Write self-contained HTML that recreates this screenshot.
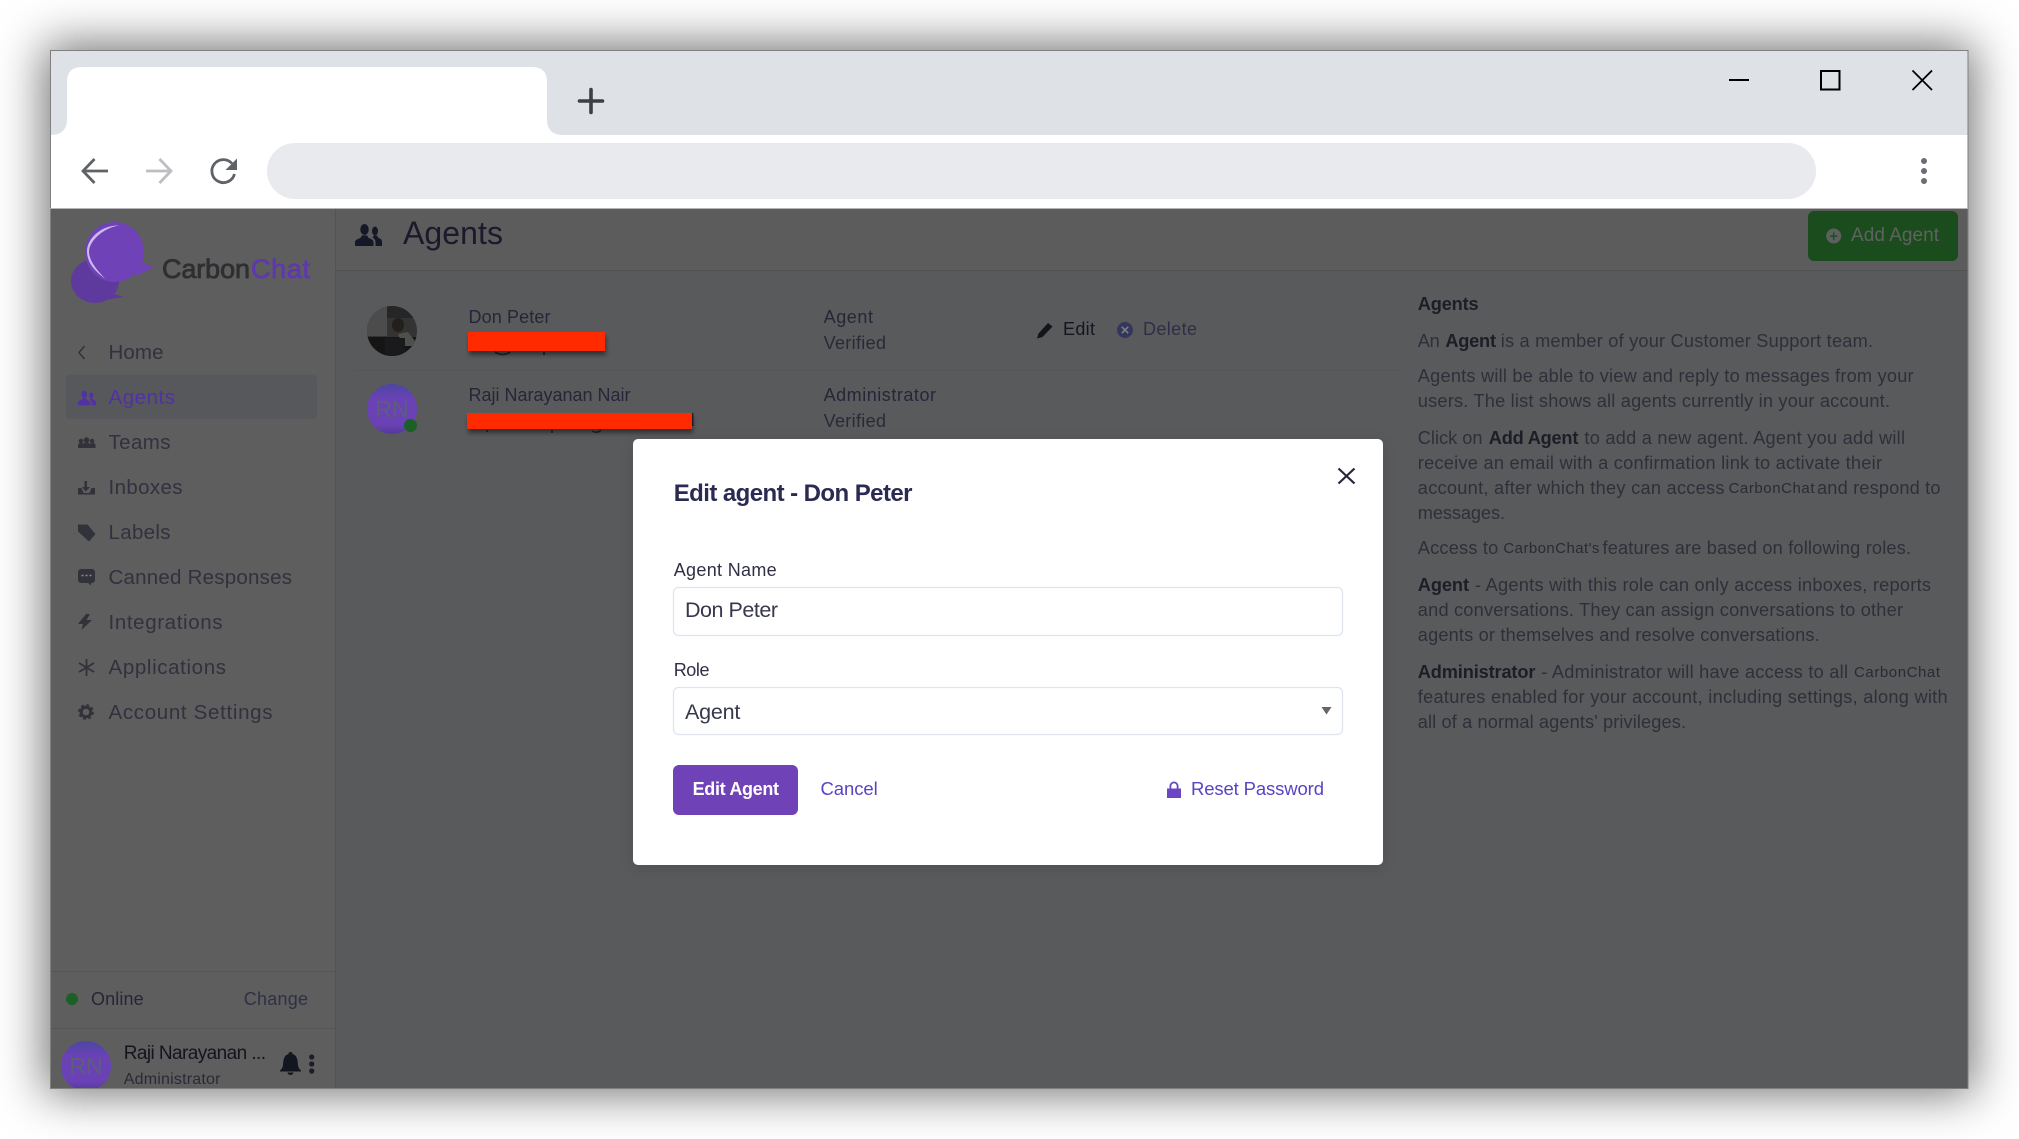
<!DOCTYPE html>
<html><head><meta charset="utf-8"><title>Agents</title>
<style>
html,body{margin:0;padding:0;background:#fff;width:2019px;height:1139px;overflow:hidden}
#w{position:absolute;left:50px;top:50px;width:1918px;height:1038px;box-shadow:0 0 44px 6px rgba(0,0,0,.55)}
svg{position:absolute;left:0;top:0}
text{font-family:"Liberation Sans",sans-serif;white-space:pre}
.n{font-size:20.5px;fill:#32313e}
.h{font-size:18.2px;fill:#2f2f3a}
.b{font-size:18.2px;font-weight:bold;fill:#1d1d27}
.c{font-size:15px;fill:#2a2a34}
.t{font-size:18px;fill:#272538}
.f{font-size:18px;fill:#2f2f46}
.v{font-size:21.500px;fill:#38384c}
.l{font-size:18.500px;fill:#5a42c4}
.i{fill:#32323a}
</style></head><body>
<div id="w"></div>
<svg width="2019" height="1139" viewBox="0 0 2019 1139" xmlns="http://www.w3.org/2000/svg">
<defs>
<filter id="rs" x="-10%" y="-30%" width="120%" height="180%"><feDropShadow dx="1" dy="4" stdDeviation="2.5" flood-color="#000" flood-opacity=".45"/></filter>
<filter id="ms" x="-5%" y="-5%" width="110%" height="110%"><feDropShadow dx="0" dy="3" stdDeviation="8" flood-color="#000" flood-opacity=".12"/></filter>
<linearGradient id="av" x1="0" y1="0" x2="0" y2="1"><stop offset="0" stop-color="#4c46a2"/><stop offset=".3" stop-color="#6a42b6"/><stop offset=".8" stop-color="#6a42b6"/><stop offset="1" stop-color="#55399a"/></linearGradient>
<clipPath id="c1"><circle cx="392" cy="331" r="25"/></clipPath>
<clipPath id="c2"><rect x="50" y="209" width="285" height="879"/></clipPath>
<symbol id="ppl" viewBox="0 0 27 22"><ellipse cx="9.5" cy="5.5" rx="4.2" ry="5.5"/><path d="M0 22v-3.500c0-3 3.500-3.600 5.500-4.600l1.500-2.500h5l1.500 2.500c2 1 5 1.600 5 4.600V22z"/><ellipse cx="20" cy="7" rx="3" ry="4.500"/><path d="M20.500 22v-4c0-2.500-1.500-3.500-3-4.500l1.500-2h3l1.500 2.500c2 .7 3.500 1.300 3.500 4v4z"/></symbol>
</defs>

<!-- browser chrome -->
<rect x="50" y="50" width="1918" height="85" fill="#dee1e6"/>
<rect x="50" y="135" width="1918" height="74" fill="#fff"/>
<path d="M50 135Q67 135 67 119V82Q67 67 82 67H532Q547 67 547 82V119Q547 135 563 135Z" fill="#fff"/>
<path d="M579.500 101H602.500M591 89.500V112.500" stroke="#3c4043" stroke-width="3.600" stroke-linecap="round" fill="none"/>
<path d="M108 171H84M94.500 159L83 171L94.500 183" stroke="#5f6368" stroke-width="2.800" fill="none"/>
<path d="M146 171H170M159.500 159L171 171L159.500 183" stroke="#bcbec1" stroke-width="2.800" fill="none"/>
<path d="M232 163.500A11.500 11.500 0 1 0 234.500 174" stroke="#5f6368" stroke-width="2.800" fill="none"/>
<path d="M237 158.500V170H225.500Z" fill="#5f6368"/>
<rect x="267" y="143" width="1549" height="56" rx="28" fill="#e8eaed"/>
<path d="M1729 80H1749" stroke="#000" stroke-width="2"/>
<rect x="1821" y="71" width="18.500" height="18.500" fill="none" stroke="#000" stroke-width="2"/>
<path d="M1912.500 70.500L1932 90M1932 70.500L1912.500 90" stroke="#000" stroke-width="1.800"/>
<circle cx="1924" cy="161" r="3" fill="#6a6d73"/><circle cx="1924" cy="171" r="3" fill="#6a6d73"/><circle cx="1924" cy="181" r="3" fill="#6a6d73"/>

<!-- app bg -->
<rect x="50" y="209" width="285" height="879" fill="#5e5e5e"/>
<rect x="335" y="209" width="1633" height="62" fill="#5c5c5c"/>
<rect x="335" y="271" width="1633" height="817" fill="#595a5c"/>
<path d="M335.500 209V1088" stroke="#525358"/>
<path d="M335 270.500H1968" stroke="#4f5054"/>
<path d="M355 370.500H1400" stroke="#55565a"/>

<!-- logo -->
<ellipse cx="95" cy="281" rx="24" ry="22" fill="#5e3a9e"/>
<path d="M108 292L124 297L104 300Z" fill="#5e3a9e"/>
<ellipse cx="114.500" cy="252" rx="29.500" ry="30" fill="#6f42b8"/>
<path d="M130 258L154 267L136 276Z" fill="#6f42b8"/>
<path d="M119 225.500C100 225 86.500 240 87 252C87.500 264 96 272 105 278.500C98 271 89.500 262 89 252C89 241 103 228 119 225.500Z" fill="#cdbbec"/>
<text x="162" y="278" font-size="27" fill="#2f2f32" stroke="#2f2f32" stroke-width=".8" textLength="88">Carbon</text>
<text x="251" y="278" font-size="27" fill="#5f38ae" stroke="#5f38ae" stroke-width=".8" textLength="59">Chat</text>

<!-- sidebar -->
<rect x="66" y="375" width="251" height="44" rx="4" fill="#57585b"/>
<path d="M84.500 346L79 352.500L84.500 359" fill="none" stroke="#32323a" stroke-width="1.500"/>
<text class="n" x="108.500" y="359" textLength="55">Home</text>
<use href="#ppl" x="78" y="390" width="18" height="16" fill="#5330a8"/>
<text class="n" x="108.500" y="404" textLength="66.500" style="fill:#5330a8">Agents</text>
<g class="i"><circle cx="81" cy="441" r="2.300"/><circle cx="86.500" cy="440" r="2.800"/><circle cx="92" cy="441" r="2.300"/><path d="M78 448v-3c0-1.500 1.500-2 3-2s2.500.5 2.500 2v3zM83 448v-3.500c0-1.500 1.500-2 3.500-2s3.500.5 3.500 2v3.500zM90 448v-3c0-1.500 1-2 2.500-2s3 .5 3 2v3z"/></g>
<path class="i" d="M84.500 481h2.500v6h3l-4.300 4.500L82 487h2.500zM78 488h3.500l2 5h6l2-5H95v6.500H78z"/>
<text class="n" x="108.500" y="449" textLength="62">Teams</text>
<text class="n" x="108.500" y="494" textLength="74">Inboxes</text>
<path class="i" d="M78 524.500h9.500l8 9.500-6.500 7.500L78 531.500z"/>
<text class="n" x="108.500" y="539" textLength="62">Labels</text>
<path class="i" d="M81 569h11a3 3 0 0 1 3 3v8a3 3 0 0 1-3 3h-1v2.500l-3-2.500h-7a3 3 0 0 1-3-3v-8a3 3 0 0 1 3-3z"/>
<path d="M81.500 575.500h2M85.500 575.500h2M89.500 575.500h2" stroke="#8a8a8e" stroke-width="1.500"/>
<text class="n" x="108.500" y="584" textLength="183.500">Canned Responses</text>
<path class="i" d="M86 614L78 624h5L81.500 630L92 620h-5.500L90 614z"/>
<text class="n" x="108.500" y="629" textLength="114">Integrations</text>
<path d="M86.500 659V676M79 663L94 672M94 663L79 672" stroke="#32323a" stroke-width="1.800" fill="none"/>
<text class="n" x="108.500" y="674" textLength="117.500">Applications</text>
<circle cx="86" cy="712" r="4.800" fill="none" stroke="#32323a" stroke-width="3"/>
<circle cx="86" cy="712" r="7" fill="none" stroke="#32323a" stroke-width="1.800" stroke-dasharray="3 2.500"/>
<text class="n" x="108.500" y="719" textLength="164">Account Settings</text>

<path d="M50 971.500H335M50 1028.500H335" stroke="#55565a"/>
<circle cx="72" cy="999" r="6" fill="#1c5f27"/>
<text class="t" x="91" y="1005" textLength="52.700">Online</text>
<text class="t" x="243.700" y="1005" textLength="64.300" style="fill:#2f2f48">Change</text>
<g clip-path="url(#c2)">
<circle cx="86" cy="1066" r="25" fill="url(#av)"/>
<text x="86" y="1074" font-size="23" text-anchor="middle" fill="#5b6078">RN</text>
</g>
<text x="123.700" y="1059" font-size="19" fill="#14141f" textLength="142.300">Raji Narayanan ...</text>
<text x="123.700" y="1084" font-size="16" fill="#2a2a36" textLength="96.800">Administrator</text>
<path d="M290.500 1052a2 2 0 0 1 2 2c5 1.500 5 6 5.500 11c.3 3 1.500 4 3 5.500v1h-21v-1c1.500-1.500 2.700-2.500 3-5.500c.5-5 .5-9.500 5.500-11a2 2 0 0 1 2-2zM287.500 1072.500h6a3 2.500 0 0 1-6 0z" fill="#14161f"/>
<circle cx="311.700" cy="1057" r="2.600" fill="#1c1d26"/><circle cx="311.700" cy="1064" r="2.600" fill="#1c1d26"/><circle cx="311.700" cy="1071" r="2.600" fill="#1c1d26"/>

<!-- header -->
<use href="#ppl" x="355" y="224" width="27" height="22" fill="#161827"/>
<text x="403" y="244" font-size="32" fill="#1a1a2c" textLength="100">Agents</text>
<rect x="1808" y="211" width="150" height="50" rx="6" fill="#1b4c1d"/>
<circle cx="1833.700" cy="236" r="7.500" fill="#5c605f"/>
<path d="M1830 236.200h7.500M1833.700 232.500v7.500" stroke="#1b4c1d" stroke-width="1.300"/>
<text x="1851" y="241" font-size="19" fill="#5e6360" textLength="88">Add Agent</text>

<!-- rows -->
<g clip-path="url(#c1)">
<rect x="367" y="306" width="50" height="50" fill="#333"/>
<rect x="367" y="306" width="20" height="30" fill="#4c4c4c"/>
<rect x="387" y="306" width="30" height="12" fill="#262626"/>
<rect x="367" y="337" width="50" height="19" fill="#151515"/>
<ellipse cx="398" cy="325" rx="6" ry="7" fill="#221f1c"/>
<path d="M398 334l10-2l7 9v5h-12z" fill="#4e504c"/>
<path d="M385 338h20v18h-20z" fill="#1a1a1c"/>
</g>
<text class="t" x="468.500" y="323" textLength="82">Don Peter</text>
<path d="M495 352q8 5 15 0M544 352v3" stroke="#26262e" stroke-width="1.800" fill="none"/>
<rect x="468" y="332" width="137" height="19" fill="#ff2a00" filter="url(#rs)"/>
<text class="t" x="823.600" y="323" textLength="49.400">Agent</text>
<text class="t" x="823.600" y="349" textLength="62.400" style="fill:#2c2836">Verified</text>
<path d="M1037 338.500l1.500-5 9.500-10.500 4.500 3.500-10 10.500z" fill="#14141c"/>
<text class="t" x="1063" y="335" textLength="32" style="fill:#15151f">Edit</text>
<circle cx="1125" cy="330" r="8" fill="#34375a"/>
<path d="M1121.800 326.800l6.400 6.400M1128.200 326.800l-6.400 6.400" stroke="#7c7e8e" stroke-width="1.600"/>
<text class="t" x="1143" y="335" textLength="54" style="fill:#2f2e48">Delete</text>

<circle cx="392" cy="409" r="25" fill="url(#av)"/>
<text x="392" y="417" font-size="23" text-anchor="middle" fill="#5b6078">RN</text>
<circle cx="410.500" cy="425.500" r="6.500" fill="#1c5f27"/>
<text class="t" x="468.500" y="401" textLength="162">Raji Narayanan Nair</text>
<path d="M487 430v2M552 430v3M592 431q5 3 9-1" stroke="#26262e" stroke-width="1.600" fill="none"/>
<rect x="692" y="413" width="1.500" height="13" fill="#26262e"/>
<rect x="467" y="413" width="225" height="16" fill="#ff2a00" filter="url(#rs)"/>
<text class="t" x="823.600" y="401" textLength="112.400">Administrator</text>
<text class="t" x="823.600" y="427" textLength="62.400" style="fill:#2c2836">Verified</text>

<!-- help -->
<text class="b" x="1417.800" y="310" textLength="60.800">Agents</text>
<text class="h" x="1417.800" y="347" textLength="22">An</text>
<text class="b" x="1445.400" y="347" textLength="50.600">Agent</text>
<text class="h" x="1500.700" y="347" textLength="372.300">is a member of your Customer Support team.</text>
<text class="h" x="1417.800" y="382" textLength="495.800">Agents will be able to view and reply to messages from your</text>
<text class="h" x="1417.800" y="407" textLength="472.200">users. The list shows all agents currently in your account.</text>
<text class="h" x="1417.800" y="444" textLength="64.700">Click on</text>
<text class="b" x="1488.800" y="444" textLength="89.600">Add Agent</text>
<text class="h" x="1584.400" y="444" textLength="320.600">to add a new agent. Agent you add will</text>
<text class="h" x="1417.800" y="469" textLength="464.200">receive an email with a confirmation link to activate their</text>
<text class="h" x="1417.800" y="494" textLength="306.700">account, after which they can access</text>
<text class="c" x="1728.500" y="493" textLength="86">CarbonChat</text>
<text class="h" x="1817" y="494" textLength="123.500">and respond to</text>
<text class="h" x="1417.800" y="519" textLength="87.200">messages.</text>
<text class="h" x="1417.800" y="554" textLength="80.500">Access to</text>
<text class="c" x="1503.400" y="553" textLength="96">CarbonChat's</text>
<text class="h" x="1602.500" y="554" textLength="308.500">features are based on following roles.</text>
<text class="b" x="1417.800" y="591" textLength="51.200">Agent</text>
<text class="h" x="1475" y="591" textLength="456">- Agents with this role can only access inboxes, reports</text>
<text class="h" x="1417.800" y="616" textLength="485.200">and conversations. They can assign conversations to other</text>
<text class="h" x="1417.800" y="641" textLength="401.900">agents or themselves and resolve conversations.</text>
<text class="b" x="1417.800" y="678" textLength="117.600">Administrator</text>
<text class="h" x="1541.300" y="678" textLength="306.700">- Administrator will have access to all</text>
<text class="c" x="1854" y="677" textLength="86">CarbonChat</text>
<text class="h" x="1417.800" y="703" textLength="529.800">features enabled for your account, including settings, along with</text>
<text class="h" x="1417.800" y="728" textLength="268.200">all of a normal agents' privileges.</text>

<!-- modal -->
<rect x="633" y="439" width="750" height="426" rx="5" fill="#fff" filter="url(#ms)"/>
<text x="673.700" y="501" font-size="24" font-weight="bold" fill="#2b2a52" textLength="238.800">Edit agent - Don Peter</text>
<path d="M1338.500 468.500L1354.500 483.500M1354.500 468.500L1338.500 483.500" stroke="#26263a" stroke-width="2.200"/>
<text class="f" x="673.700" y="576" textLength="103">Agent Name</text>
<rect x="673.500" y="587.500" width="669" height="48" rx="5" fill="#fff" stroke="#e0e4ef" stroke-width="1.300"/>
<text class="v" x="685" y="617" textLength="93">Don Peter</text>
<text class="f" x="673.700" y="676" textLength="35.800">Role</text>
<rect x="673.500" y="687.500" width="669" height="47" rx="5" fill="#fff" stroke="#e0e4ef" stroke-width="1.300"/>
<text class="v" x="685" y="719" textLength="55.400">Agent</text>
<path d="M1321.500 707H1331.500L1326.500 714.500Z" fill="#666"/>
<rect x="673" y="765" width="125" height="50" rx="6" fill="#6f42b8"/>
<text x="692.600" y="795" font-size="18" font-weight="bold" fill="#fff" textLength="86.400">Edit Agent</text>
<text class="l" x="820.500" y="795" textLength="57.200">Cancel</text>
<path d="M1167 788.500h14v9.500h-14zM1169.500 788.500v-2.500a4.500 4.500 0 0 1 9 0v2.500h-1.800v-2.500a2.700 2.700 0 0 0-5.400 0v2.500z" fill="#6a45c4"/>
<text class="l" x="1191" y="795" textLength="133">Reset Password</text>

<!-- window border -->
<rect x="50.500" y="50.500" width="1917.500" height="1038" fill="none" stroke="#808080" stroke-width="1"/>
<path d="M50 208.500H1968" stroke="#b5b5b5"/>
</svg>
</body></html>
